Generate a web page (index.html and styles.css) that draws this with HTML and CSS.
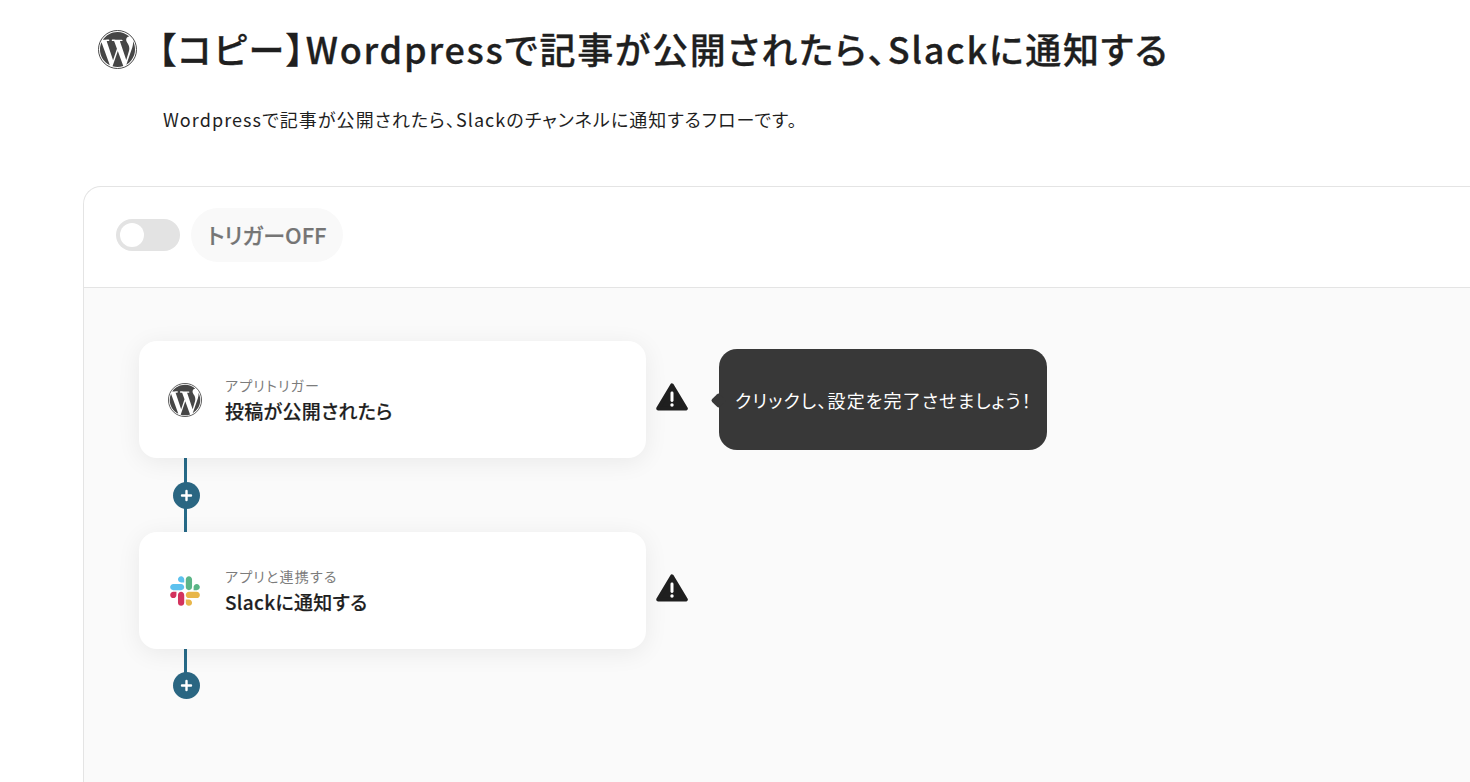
FILE: index.html
```html
<!DOCTYPE html>
<html lang="ja">
<head>
    <meta charset="UTF-8">
    <meta name="viewport" content="width=device-width, initial-scale=1.0">
    <title>【コピー】Wordpressで記事が公開されたら、Slackに通知する</title>
    <link rel="stylesheet" href="styles.css">
</head>
<body>
    <svg class="icon-defs" width="0" height="0" aria-hidden="true">
        <symbol id="wp" viewBox="0 0 24 24">
            <circle cx="12" cy="12" r="11.7" fill="none" stroke="#464646" stroke-width=".6"/>
            <path d="M21.469 6.825c.84 1.537 1.318 3.3 1.318 5.175 0 3.979-2.156 7.456-5.363 9.325l3.295-9.527c.615-1.54.82-2.771.82-3.864 0-.405-.026-.78-.07-1.11m-7.981.105c.647-.03 1.232-.105 1.232-.105.582-.075.514-.93-.067-.899 0 0-1.755.135-2.88.135-1.064 0-2.85-.15-2.85-.15-.585-.03-.661.855-.075.885 0 0 .54.061 1.125.09l1.68 4.605-2.37 7.08L5.354 6.9c.649-.03 1.234-.1 1.234-.1.585-.075.516-.93-.065-.896 0 0-1.746.138-2.874.138-.2 0-.438-.008-.69-.015C4.911 3.15 8.235 1.215 12 1.215c2.809 0 5.365 1.072 7.286 2.833-.046-.003-.091-.009-.141-.009-1.06 0-1.812.923-1.812 1.914 0 .89.513 1.643 1.06 2.531.411.72.89 1.643.89 2.977 0 .915-.354 1.994-.821 3.479l-1.075 3.585-3.9-11.61.001.014zM12 22.784c-1.059 0-2.081-.153-3.048-.437l3.237-9.406 3.315 9.087c.024.053.05.101.078.149-1.12.393-2.325.609-3.582.609M1.211 12c0-1.564.336-3.05.935-4.39L7.29 21.709C3.694 19.96 1.212 16.271 1.211 12"/>
        </symbol>
        <symbol id="warn" viewBox="0 0 32 28">
            <path d="M16 2.4 L29.8 25.6 H2.2 Z" stroke="#1f1f1f" stroke-width="4" stroke-linejoin="round" fill="#1f1f1f"/>
            <rect x="14.5" y="8.5" width="3" height="10.5" rx="1.4" fill="#fff"/>
            <circle cx="16" cy="22" r="1.7" fill="#fff"/>
        </symbol>
        <symbol id="plus" viewBox="0 0 27 27">
            <path d="M13.5 9v9M9 13.5h9" stroke="#fff" stroke-width="2.4" stroke-linecap="round"/>
        </symbol>
    </svg>

    <header class="page-head">
        <div class="title-row">
            <svg class="title-icon"><use href="#wp"/></svg>
            <h1>【コピー】Wordpressで記事が公開されたら、Slackに通知する</h1>
        </div>
        <p class="description">Wordpressで記事が公開されたら、Slackのチャンネルに通知するフローです。</p>
    </header>

    <section class="panel">
        <div class="panel-bar">
            <div class="toggle"><span class="toggle-knob"></span></div>
            <div class="trigger-state">トリガーOFF</div>
        </div>
        <div class="flow">
            <div class="flow-row">
                <div class="step-card">
                    <svg class="app-icon"><use href="#wp"/></svg>
                    <div class="step-text">
                        <div class="step-type">アプリトリガー</div>
                        <div class="step-name">投稿が公開されたら</div>
                    </div>
                </div>
                <svg class="warn-icon"><use href="#warn"/></svg>
                <div class="tooltip">クリックし、設定を完了させましょう！</div>
            </div>
            <div class="connector">
                <span class="plus"><svg><use href="#plus"/></svg></span>
            </div>
            <div class="flow-row">
                <div class="step-card">
                    <svg class="app-icon slack" viewBox="0 0 127 127">
                        <path fill="#D3335E" d="M27.2 80c0 7.3-5.9 13.2-13.2 13.2C6.7 93.2.8 87.3.8 80c0-7.3 5.9-13.2 13.2-13.2h13.2V80zm6.6 0c0-7.3 5.9-13.2 13.2-13.2 7.3 0 13.2 5.9 13.2 13.2v33c0 7.3-5.9 13.2-13.2 13.2-7.3 0-13.2-5.9-13.2-13.2V80z"/>
                        <path fill="#5CC1EE" d="M47 27c-7.3 0-13.2-5.9-13.2-13.2C33.8 6.5 39.7.6 47 .6c7.3 0 13.2 5.9 13.2 13.2V27H47zm0 6.7c7.3 0 13.2 5.9 13.2 13.2 0 7.3-5.9 13.2-13.2 13.2H13.9C6.6 60.1.7 54.2.7 46.9c0-7.3 5.9-13.2 13.2-13.2H47z"/>
                        <path fill="#5BB587" d="M99.9 46.9c0-7.3 5.9-13.2 13.2-13.2 7.3 0 13.2 5.9 13.2 13.2 0 7.3-5.9 13.2-13.2 13.2H99.9V46.9zm-6.6 0c0 7.3-5.9 13.2-13.2 13.2-7.3 0-13.2-5.9-13.2-13.2V13.8C66.9 6.5 72.8.6 80.1.6c7.3 0 13.2 5.9 13.2 13.2v33.1z"/>
                        <path fill="#E8B64A" d="M80.1 99.8c7.3 0 13.2 5.9 13.2 13.2 0 7.3-5.9 13.2-13.2 13.2-7.3 0-13.2-5.9-13.2-13.2V99.8h13.2zm0-6.6c-7.3 0-13.2-5.9-13.2-13.2 0-7.3 5.9-13.2 13.2-13.2h33.1c7.3 0 13.2 5.9 13.2 13.2 0 7.3-5.9 13.2-13.2 13.2H80.1z"/>
                    </svg>
                    <div class="step-text">
                        <div class="step-type">アプリと連携する</div>
                        <div class="step-name">Slackに通知する</div>
                    </div>
                </div>
                <svg class="warn-icon"><use href="#warn"/></svg>
            </div>
            <div class="connector connector-end">
                <span class="plus"><svg><use href="#plus"/></svg></span>
            </div>
        </div>
    </section>
</body>
</html>
```

FILE: styles.css
```css
body {
    margin: 0;
    height: 782px;
    overflow: hidden;
    background-color: #fff;
    color: #1f1f1f;
    font-family: "Noto Sans CJK JP", "Noto Sans", sans-serif;
    font-feature-settings: "palt";
}
.icon-defs {
    position: absolute;
}
.page-head {
    height: 186px;
    padding-left: 98px;
    box-sizing: border-box;
}
.title-row {
    display: flex;
    align-items: center;
    gap: 21px;
    height: 99px;
}
.title-icon {
    width: 39px;
    height: 39px;
    fill: #464646;
    flex: none;
}
h1 {
    margin: 0 0 3px;
    font-size: 36px;
    line-height: 48px;
    font-weight: 500;
    letter-spacing: 1.72px;
    -webkit-text-stroke: 0.3px #1f1f1f;
    white-space: nowrap;
}
.description {
    margin: 7px 0 0 65px;
    font-size: 18px;
    line-height: 26px;
    letter-spacing: 1.07px;
}
.panel {
    width: 1387px;
    height: 596px;
    margin-left: 83px;
    border: 1px solid #e4e4e4;
    border-right: 0;
    border-bottom: 0;
    border-radius: 18px 0 0 0;
    box-sizing: border-box;
    overflow: hidden;
}
.panel-bar {
    display: flex;
    align-items: center;
    height: 101px;
    padding: 0 0 4px 32px;
    gap: 11px;
    box-sizing: border-box;
    border-bottom: 1px solid #e4e4e4;
}
.toggle {
    width: 64px;
    height: 32px;
    padding: 4px;
    box-sizing: border-box;
    border-radius: 16px;
    background-color: #e3e3e3;
}
.toggle-knob {
    display: block;
    width: 24px;
    height: 24px;
    border-radius: 50%;
    background-color: #fff;
}
.trigger-state {
    width: 152px;
    height: 54px;
    border-radius: 27px;
    background-color: #f9f9f9;
    color: #757575;
    font-size: 22px;
    font-weight: 500;
    line-height: 53px;
    text-align: center;
    -webkit-text-stroke: 0.2px #757575;
}
.flow {
    height: 494px;
    padding: 53px 0 0 55px;
    box-sizing: border-box;
    background-color: #fafafa;
}
.flow-row {
    display: flex;
    align-items: center;
    height: 117px;
}
.step-card {
    display: flex;
    align-items: center;
    width: 507px;
    height: 117px;
    padding-left: 29px;
    box-sizing: border-box;
    border-radius: 18px;
    background-color: #fff;
    box-shadow: 0 4px 24px rgba(0, 0, 0, 0.07);
    flex: none;
}
.app-icon {
    width: 34px;
    height: 34px;
    fill: #464646;
    flex: none;
}
.slack {
    width: 30px;
    height: 30px;
    margin: 0 2px;
}
.step-text {
    margin-left: 23px;
    padding-top: 2px;
}
.step-type {
    font-size: 14px;
    line-height: 20px;
    letter-spacing: 1.2px;
    color: #7c7c7c;
}
.step-name {
    margin-top: 1px;
    font-size: 19px;
    line-height: 30px;
    font-weight: 500;
    letter-spacing: 0.3px;
    -webkit-text-stroke: 0.2px #1f1f1f;
}
.warn-icon {
    width: 32px;
    height: 28px;
    margin: 0 0 6px 10px;
    flex: none;
}
.tooltip {
    position: relative;
    display: flex;
    align-items: center;
    width: 328px;
    height: 101px;
    margin-left: 31px;
    padding-left: 16px;
    box-sizing: border-box;
    border-radius: 18px;
    background-color: #383838;
    color: #fff;
    font-size: 18px;
    letter-spacing: 1.17px;
    white-space: nowrap;
}
.tooltip::before {
    content: "";
    position: absolute;
    left: -6px;
    top: 50%;
    width: 11px;
    height: 11px;
    margin-top: -5px;
    border-radius: 2px;
    background-color: #383838;
    transform: rotate(45deg);
}
.connector {
    display: flex;
    align-items: center;
    justify-content: center;
    width: 27px;
    height: 74px;
    margin-left: 34px;
    background: linear-gradient(#266a88, #266a88) 11px 0 / 3px 100% no-repeat;
}
.connector-end {
    height: 50px;
    align-items: flex-end;
    background-size: 3px 24px;
}
.plus {
    display: block;
    width: 27px;
    height: 27px;
    border-radius: 50%;
    background-color: #2a6682;
}
.plus svg {
    display: block;
    width: 27px;
    height: 27px;
}
```
